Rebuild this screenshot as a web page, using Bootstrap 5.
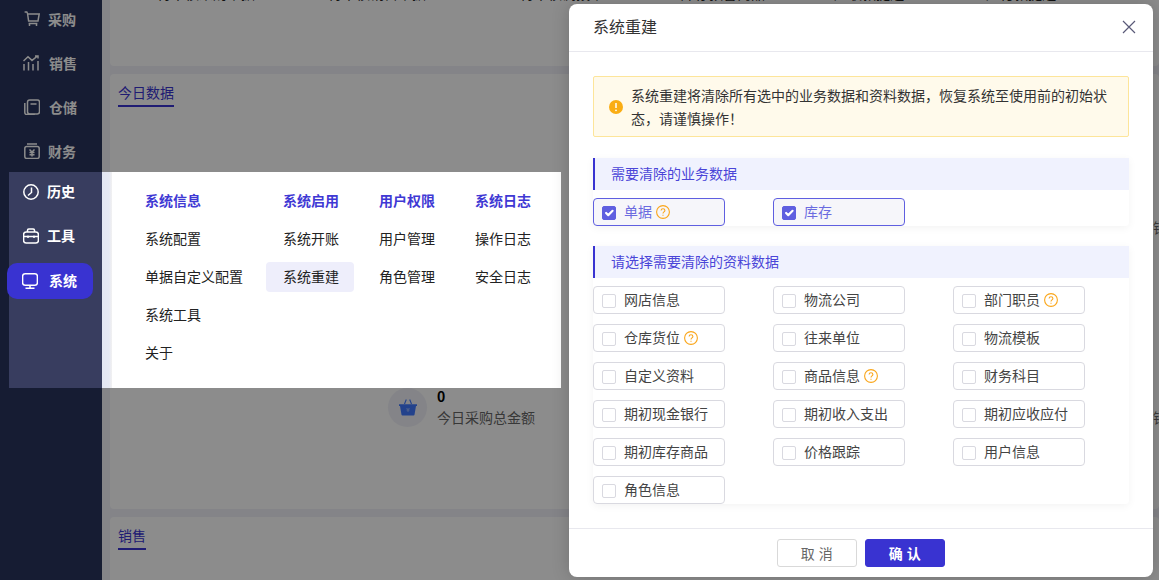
<!DOCTYPE html>
<html lang="zh-CN">
<head>
<meta charset="utf-8">
<title>系统重建</title>
<link href="https://cdn.jsdelivr.net/npm/bootstrap@5.3.0/dist/css/bootstrap.min.css" rel="stylesheet">
<style>
html,body{height:580px;overflow:hidden;}
body{font-family:"Noto Sans CJK SC","Liberation Sans",sans-serif;font-size:14px;color:#222;background:#f0f1f8;}
.app-shell{position:relative;width:1159px;height:580px;overflow:hidden;}
.side-rail{width:102px;background:#28335d;flex:none;overflow:hidden;}
.side-list{margin-top:-3px;}
.side-link{height:44px;color:#fff;font-weight:700;}
.side-link svg{width:16px;height:16px;flex:none;}
.in-cart{padding-left:24px;gap:8px;}
.in-sale{padding-left:23px;gap:10px;}
.in-ware{padding-left:24px;gap:9px;}
.in-fin{padding-left:24px;gap:8px;}
.main-pane{flex:1;padding-left:8px;min-width:0;}
.pane-top{height:66px;margin-bottom:8px;background:#fff;border-radius:0 0 4px 4px;}
.frag{position:relative;top:-17px;height:20px;line-height:20px;white-space:nowrap;color:#222;margin-bottom:-3px;}
.frag span{flex:none;}
.pane-mid{height:435px;margin-bottom:8px;background:#fff;border-radius:4px;}
.pane-low{height:80px;background:#fff;border-radius:4px;}
.pane-title{display:block;width:max-content;margin-left:8px;height:33px;line-height:22px;padding-top:7px;border-bottom:2px solid #3933d1;color:#3933d1;}
.stat-row{height:38px;white-space:nowrap;}
.stat-a{margin-left:278px;}
.stat-b{margin-left:557px;}
.stat-dot{width:39px;height:39px;border-radius:50%;background:#f0f1f8;flex:none;}
.stat-dot svg{width:18px;height:18px;}
.stat-text{margin-left:10px;width:110px;line-height:21px;flex:none;}
.stat-num{font-weight:700;color:#000;min-height:21px;}
.stat-cap{color:#666;}
.dim-mask{position:absolute;inset:0;background:rgba(0,0,0,.45);z-index:5;}
.nav-pop{position:absolute;left:9px;top:172px;width:552px;height:216px;z-index:6;}
.pop-rail{width:93px;background:#383d5f;flex:none;padding-top:2px;}
.pop-link{height:36px;margin-bottom:8px;color:#fff;font-weight:700;gap:8px;padding-left:14px;}
.pop-link span{position:relative;top:-1px;}
.pop-link svg{width:16px;height:16px;flex:none;}
.pop-link.now{margin:1px 0 0 -2px;width:86px;background:#3933d1;border-radius:10px;padding-left:15px;gap:11px;}
.pop-edge{width:10px;background:linear-gradient(90deg,#e3e6f3 0,#e6e8f3 70%,#f1f1f1 100%);flex:none;}
.pop-menu{flex:1;background:#fff;padding:14px 15px 0 16px;gap:8px;}
.pop-col{gap:8px;}
.pop-item{height:30px;line-height:28px;padding:0 15px 0 17px;border-radius:4px;white-space:nowrap;color:#222;}
.pop-item.head{font-weight:700;color:#3f39d4;}
.pop-item.on{background:#eeeefb;}
.rb-dialog{position:absolute;left:569px;top:4px;width:584px;height:573px;z-index:7;border:0;border-radius:8px;background:#fff;box-shadow:0 0 18px rgba(0,0,0,.18);}
.rb-dialog .modal-header{height:48px;padding:0 16px 0 24px;border-bottom:1px solid #e8e8ee;}
.rb-title{font-size:16px;color:#333;line-height:24px;font-weight:400;margin:-3px 0 0;}
.rb-close{width:16px;height:16px;padding:0;border:0;background:none;line-height:0;margin-top:-1px;}
.rb-close svg{width:16px;height:16px;}
.rb-dialog .modal-body{padding:24px 24px 0;height:476px;flex:none;overflow:hidden;}
.rb-warn{height:61px;margin:0 0 21px;padding:0 16px 0 15px;gap:8px;background:#fffaeb;border:1px solid #fde59a;border-radius:2px;color:#333;line-height:23px;}
.rb-warn svg{width:14px;height:14px;flex:none;}
.rb-sec{box-shadow:0 2px 8px rgba(0,0,0,.05);border-radius:0 0 4px 4px;margin-bottom:20px;}
.rb-sec-head{height:32px;line-height:30px;padding-left:16px;background:#f0f2fe;border-left:2px solid #3933d1;color:#4a45d8;}
.rb-grid{display:grid;grid-template-columns:repeat(3,132px);column-gap:48px;row-gap:10px;padding-top:8px;}
.rb-opt{height:28px;padding-left:8px;gap:8px;border:1px solid #d9d9e0;border-radius:4px;color:#444;margin:0;background:#fff;}
.rb-opt span{position:relative;top:-1px;}
.rb-opt .form-check-input{width:14px;height:14px;margin:1px 0 0;border-radius:2px;border-color:#d9d9e0;flex:none;}
.rb-opt.sel{border-color:#5f5fe0;background:#f6f6fa;color:#6b6be0;}
.rb-opt.sel .form-check-input{background-color:#5f5fe0;border-color:#5f5fe0;opacity:1;background-size:120%;}
.rb-opt svg{width:14px;height:14px;margin-left:-4px;flex:none;}
.rb-dialog .modal-footer{height:49px;padding:0;gap:8px;border-top:1px solid #e8e8ee;flex-wrap:nowrap;}
.rb-dialog .modal-footer .btn{margin:0;width:80px;height:28px;padding:0;font-size:14px;line-height:26px;border-radius:3px;letter-spacing:.5px;}
.btn-quit{background:#fff;border:1px solid #d9d9d9;color:#666;}
.btn-okay{background:#3933d1;border:1px solid #3933d1;color:#fff;font-weight:700;}
</style>
</head>
<body>
<div class="app-shell d-flex">
  <aside class="side-rail">
    <div class="side-list d-flex flex-column">
      <div class="side-link d-flex align-items-center in-cart"><svg viewBox="0 0 16 16" fill="none" stroke="currentColor" stroke-width="1.500"><path d="M.6 1h2.200l1 2h11.400l-1.200 7H4.600L3.600 3"/><path d="M5.500 13v2M12.500 13v2M4.600 12.500h8.800"/></svg><span>采购</span></div>
      <div class="side-link d-flex align-items-center in-sale"><svg viewBox="0 0 16 16" fill="none" stroke="currentColor" stroke-width="1.500"><path d="M.5 6 5 1.800l4 3.600 5.500-4.400M12 1h3v2.600"/><path d="M1 9v6.500M5.500 7v8.500M10 9v6.500M15 6v9.500"/></svg><span>销售</span></div>
      <div class="side-link d-flex align-items-center in-ware"><svg viewBox="0 0 16 16" fill="none" stroke="currentColor" stroke-width="1.500"><rect x="3.500" y="1" width="12" height="14" rx="2.200"/><path d="M6.500 5h6"/><path d="M.8 4v9.500c0 1 .7 2 2 2h8"/></svg><span>仓储</span></div>
      <div class="side-link d-flex align-items-center in-fin"><svg viewBox="0 0 16 16" fill="none" stroke="currentColor" stroke-width="1.500"><rect x=".8" y="3.600" width="14.400" height="11.800" rx="2"/><path d="M3 1h10M5.500 6.500 8 9l2.500-2.500M5.500 9.500h5M5.500 11.800h5M8 9v4.500"/></svg><span>财务</span></div>
    </div>
  </aside>
  <main class="main-pane">
    <section class="pane-top">
      <div class="frag d-flex">
        <span style="margin-left:47px">待审核采购单据</span><span style="margin-left:73px">待审核销售单据</span><span style="margin-left:94px">待审核调拨单</span><span style="margin-left:77px">库存预警商品</span><span style="margin-left:69px">应收款提醒</span><span style="margin-left:82px">应付款提醒</span>
      </div>
    </section>
    <section class="pane-mid">
      <div class="pane-title">今日数据</div>
      <div class="stat-row d-flex align-items-center" style="margin-top:91px">
        <div class="stat-a stat-dot d-flex align-items-center justify-content-center"></div>
        <div class="stat-text"><div class="stat-num">0</div><div class="stat-cap">今日销售总金额</div></div>
        <div class="stat-b stat-dot"></div>
        <div class="stat-text"><div class="stat-num"></div><div class="stat-cap">销售总金额</div></div>
      </div>
      <div class="stat-row d-flex align-items-center" style="margin-top:152px">
        <div class="stat-a stat-dot d-flex align-items-center justify-content-center"><svg viewBox="0 0 18 18"><path d="M5.500 6 7.300 1.500M12.500 6 10.700 1.500" stroke="#4079ff" stroke-width="1.100" fill="none"/><path d="M0 6.200h18v1.900h-1l-1.500 8.700a1 1 0 0 1-1 .8h-11a1 1 0 0 1-1-.8L1 8.100H0z" fill="#4079ff"/><path d="M7.500 10 9 11.500 10.500 10M7.500 12h3M9 11.500V14" stroke="#a9c2ff" stroke-width=".8" fill="none"/></svg></div>
        <div class="stat-text"><div class="stat-num">0</div><div class="stat-cap">今日采购总金额</div></div>
        <div class="stat-b stat-dot"></div>
        <div class="stat-text"><div class="stat-num"></div><div class="stat-cap">销售总金额</div></div>
      </div>
    </section>
    <section class="pane-low"><div class="pane-title">销售</div></section>
  </main>

  <div class="dim-mask"></div>

  <div class="nav-pop d-flex">
    <div class="pop-rail d-flex flex-column">
      <div class="pop-link d-flex align-items-center"><svg viewBox="0 0 16 16" fill="none" stroke="currentColor" stroke-width="1.500"><circle cx="8" cy="8" r="7.200"/><path d="M8.500 3.500V8.500L5 11.500"/></svg><span>历史</span></div>
      <div class="pop-link d-flex align-items-center"><svg viewBox="0 0 16 16" fill="none" stroke="currentColor" stroke-width="1.500"><rect x=".6" y="4" width="14.800" height="11" rx="2.500"/><path d="M4.500 4V2.200C4.500 1.400 5 1 5.800 1h4.400c.8 0 1.300.4 1.300 1.200V4M.6 8.500h14.800M5 7.500v2.500M11 7.500v2.500"/></svg><span>工具</span></div>
      <div class="pop-link now d-flex align-items-center"><svg viewBox="0 0 16 16" fill="none" stroke="currentColor" stroke-width="1.500"><rect x=".6" y=".8" width="14.800" height="11.400" rx="2.500"/><path d="M8 12.200v3M3.500 15.300h9"/></svg><span>系统</span></div>
    </div>
    <div class="pop-edge"></div>
    <div class="pop-menu d-flex">
      <div class="pop-col d-flex flex-column"><div class="pop-item head">系统信息</div><div class="pop-item">系统配置</div><div class="pop-item">单据自定义配置</div><div class="pop-item">系统工具</div><div class="pop-item">关于</div></div>
      <div class="pop-col d-flex flex-column"><div class="pop-item head">系统启用</div><div class="pop-item">系统开账</div><div class="pop-item on">系统重建</div></div>
      <div class="pop-col d-flex flex-column"><div class="pop-item head">用户权限</div><div class="pop-item">用户管理</div><div class="pop-item">角色管理</div></div>
      <div class="pop-col d-flex flex-column"><div class="pop-item head">系统日志</div><div class="pop-item">操作日志</div><div class="pop-item">安全日志</div></div>
    </div>
  </div>

  <div class="modal-content rb-dialog">
    <div class="modal-header d-flex align-items-center justify-content-between">
      <h5 class="rb-title">系统重建</h5>
      <button type="button" class="rb-close" aria-label="关闭"><svg viewBox="0 0 16 16" fill="none" stroke="#5a5a78" stroke-width="1.200"><path d="M2 2l12 12M14 2 2 14"/></svg></button>
    </div>
    <div class="modal-body">
      <div class="alert rb-warn d-flex align-items-center" role="alert">
        <svg viewBox="0 0 14 14"><circle cx="7" cy="7" r="7" fill="#faad14"/><path d="M7 3v5" stroke="#fff" stroke-width="1.500"/><circle cx="7" cy="10.300" r=".9" fill="#fff"/></svg>
        <div>系统重建将清除所有选中的业务数据和资料数据&#xFF0C;恢复系统至使用前的初始状态&#xFF0C;请谨慎操作&#xFF01;</div>
      </div>
      <div class="rb-sec" style="height:68px">
        <div class="rb-sec-head">需要清除的业务数据</div>
        <div class="rb-grid">
          <label class="rb-opt sel d-flex align-items-center"><input class="form-check-input" type="checkbox" checked><span>单据</span><svg viewBox="0 0 14 14" fill="none" stroke="#faa61a" stroke-width="1.100"><use href="#help-mark"/></svg></label>
          <label class="rb-opt sel d-flex align-items-center"><input class="form-check-input" type="checkbox" checked><span>库存</span></label>
        </div>
      </div>
      <div class="rb-sec" style="height:258px">
        <div class="rb-sec-head">请选择需要清除的资料数据</div>
        <div class="rb-grid">
          <label class="rb-opt d-flex align-items-center"><input class="form-check-input" type="checkbox"><span>网店信息</span></label>
          <label class="rb-opt d-flex align-items-center"><input class="form-check-input" type="checkbox"><span>物流公司</span></label>
          <label class="rb-opt d-flex align-items-center"><input class="form-check-input" type="checkbox"><span>部门职员</span><svg viewBox="0 0 14 14" fill="none" stroke="#faa61a" stroke-width="1.100"><use href="#help-mark"/></svg></label>
          <label class="rb-opt d-flex align-items-center"><input class="form-check-input" type="checkbox"><span>仓库货位</span><svg viewBox="0 0 14 14" fill="none" stroke="#faa61a" stroke-width="1.100"><use href="#help-mark"/></svg></label>
          <label class="rb-opt d-flex align-items-center"><input class="form-check-input" type="checkbox"><span>往来单位</span></label>
          <label class="rb-opt d-flex align-items-center"><input class="form-check-input" type="checkbox"><span>物流模板</span></label>
          <label class="rb-opt d-flex align-items-center"><input class="form-check-input" type="checkbox"><span>自定义资料</span></label>
          <label class="rb-opt d-flex align-items-center"><input class="form-check-input" type="checkbox"><span>商品信息</span><svg viewBox="0 0 14 14" fill="none" stroke="#faa61a" stroke-width="1.100"><use href="#help-mark"/></svg></label>
          <label class="rb-opt d-flex align-items-center"><input class="form-check-input" type="checkbox"><span>财务科目</span></label>
          <label class="rb-opt d-flex align-items-center"><input class="form-check-input" type="checkbox"><span>期初现金银行</span></label>
          <label class="rb-opt d-flex align-items-center"><input class="form-check-input" type="checkbox"><span>期初收入支出</span></label>
          <label class="rb-opt d-flex align-items-center"><input class="form-check-input" type="checkbox"><span>期初应收应付</span></label>
          <label class="rb-opt d-flex align-items-center"><input class="form-check-input" type="checkbox"><span>期初库存商品</span></label>
          <label class="rb-opt d-flex align-items-center"><input class="form-check-input" type="checkbox"><span>价格跟踪</span></label>
          <label class="rb-opt d-flex align-items-center"><input class="form-check-input" type="checkbox"><span>用户信息</span></label>
          <label class="rb-opt d-flex align-items-center"><input class="form-check-input" type="checkbox"><span>角色信息</span></label>
        </div>
      </div>
    </div>
    <div class="modal-footer d-flex justify-content-center">
      <button type="button" class="btn btn-quit">取 消</button>
      <button type="button" class="btn btn-okay">确 认</button>
    </div>
  </div>
</div>
<svg width="0" height="0" class="d-block position-absolute"><defs><g id="help-mark"><circle cx="7" cy="7" r="6.400"/><path d="M5.100 5.500C5.100 4.400 6 3.700 7 3.700s1.900.7 1.900 1.700c0 1.400-1.900 1.500-1.900 3"/><path d="M7 9.700v1.100"/></g></defs></svg>
<script src="https://cdn.jsdelivr.net/npm/bootstrap@5.3.0/dist/js/bootstrap.bundle.min.js"></script>
</body>
</html>
